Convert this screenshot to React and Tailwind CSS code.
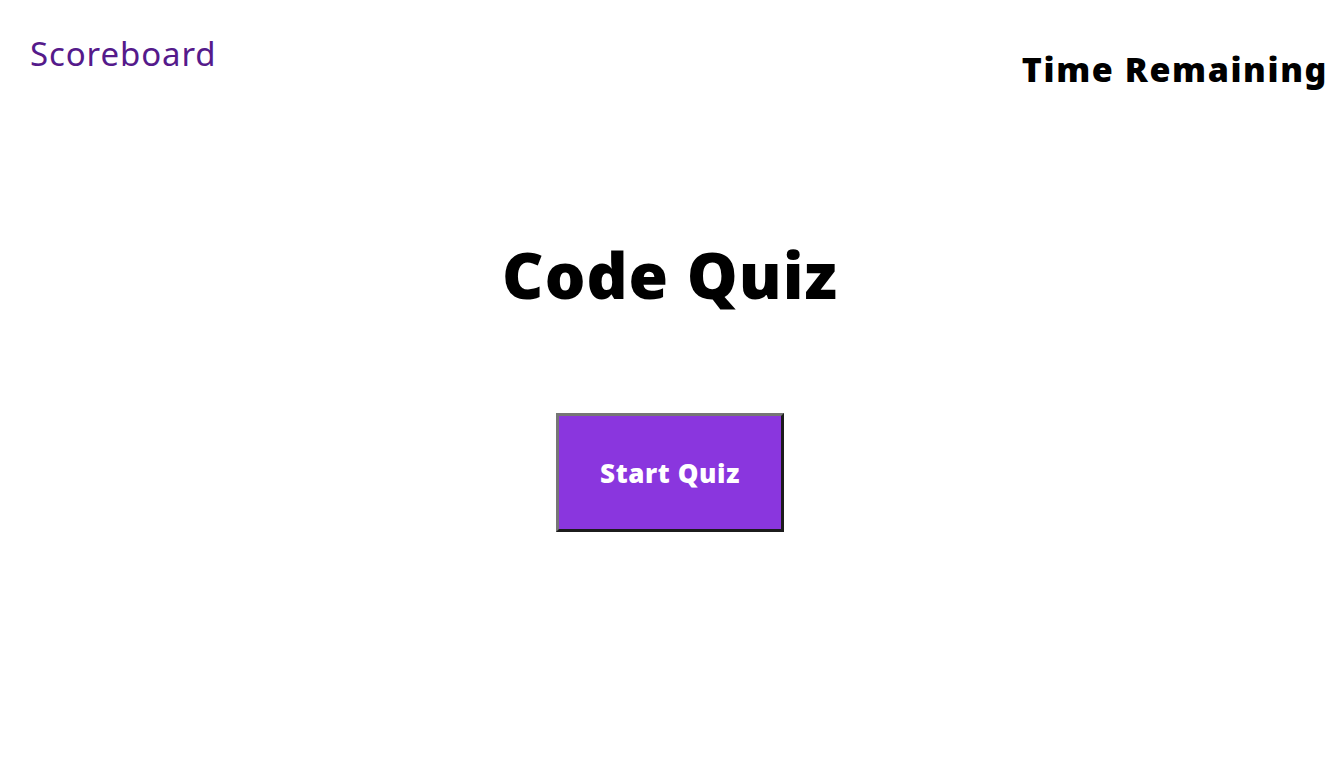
import React from 'react';

const App = () => {
	return (
		<div className="min-h-[770px] bg-white font-['Noto_Sans',sans-serif] text-black">
			<header className="flex flex-row justify-between items-start">
				<a href="#" className="ml-[30px] mt-[37px] text-[33px] leading-none tracking-[0.9px] text-[#551a8b]">
					Scoreboard
				</a>
				<h2 className="mr-[12px] mt-[52px] text-[34px] font-black leading-none tracking-[1.6px]">Time Remaining</h2>
			</header>
			<main className="flex flex-col items-center">
				<h1 className="mt-[157px] text-[64px] font-black leading-none tracking-[1px]">Code Quiz</h1>
				<button
					type="button"
					className="mt-[106px] w-[228px] h-[119px] bg-[#8a36de] text-white text-[26px] font-black leading-none tracking-[0.6px] border-[3px] border-t-[#767676] border-l-[#767676] border-b-[#1c1c1c] border-r-[#1c1c1c]"
				>
					Start Quiz
				</button>
			</main>
		</div>
	);
};

export default App;
